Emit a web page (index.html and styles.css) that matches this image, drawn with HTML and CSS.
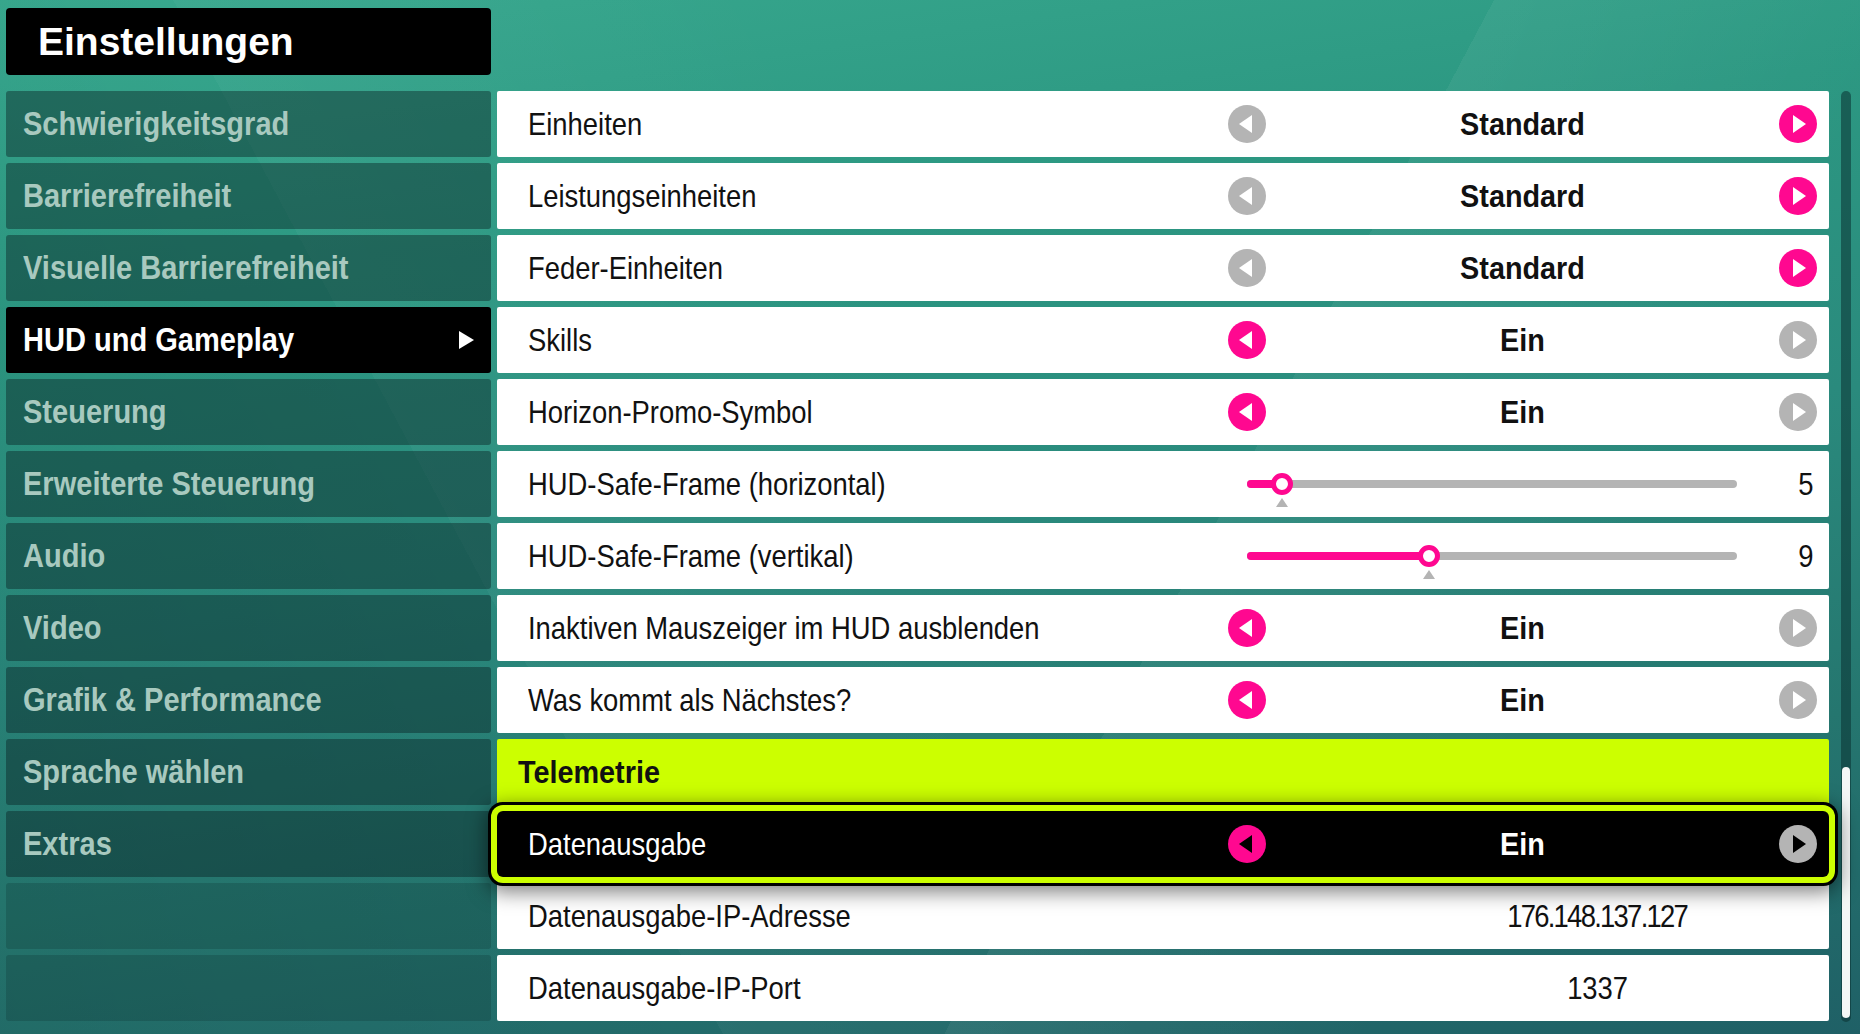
FILE: index.html
```html
<!DOCTYPE html>
<html lang="de">
<head>
<meta charset="UTF-8" />
<meta name="viewport" content="width=device-width, initial-scale=1" />
<title>Einstellungen</title>
<link rel="stylesheet" href="styles.css">
</head>
<body>
  <div class="screen">
    <header class="title-bar">
      <h1>Einstellungen</h1>
    </header>

    <div class="content">
      <nav class="menu">
        <div class="menu-item"><span>Schwierigkeitsgrad</span></div>
        <div class="menu-item"><span>Barrierefreiheit</span></div>
        <div class="menu-item"><span>Visuelle Barrierefreiheit</span></div>
        <div class="menu-item active"><span>HUD und Gameplay</span></div>
        <div class="menu-item"><span>Steuerung</span></div>
        <div class="menu-item"><span>Erweiterte Steuerung</span></div>
        <div class="menu-item"><span>Audio</span></div>
        <div class="menu-item"><span>Video</span></div>
        <div class="menu-item"><span>Grafik &amp; Performance</span></div>
        <div class="menu-item"><span>Sprache wählen</span></div>
        <div class="menu-item"><span>Extras</span></div>
        <div class="menu-item empty"></div>
        <div class="menu-item empty"></div>
      </nav>

      <section class="options">
        <div class="option">
          <span class="label">Einheiten</span>
          <div class="control">
            <svg class="arrow off" viewBox="0 0 38 38"><circle cx="19" cy="19" r="19"/><polygon points="24,10 11,19 24,28"/></svg>
            <span class="value">Standard</span>
            <svg class="arrow on" viewBox="0 0 38 38"><circle cx="19" cy="19" r="19"/><polygon points="14,10 27,19 14,28"/></svg>
          </div>
        </div>
        <div class="option">
          <span class="label">Leistungseinheiten</span>
          <div class="control">
            <svg class="arrow off" viewBox="0 0 38 38"><circle cx="19" cy="19" r="19"/><polygon points="24,10 11,19 24,28"/></svg>
            <span class="value">Standard</span>
            <svg class="arrow on" viewBox="0 0 38 38"><circle cx="19" cy="19" r="19"/><polygon points="14,10 27,19 14,28"/></svg>
          </div>
        </div>
        <div class="option">
          <span class="label">Feder-Einheiten</span>
          <div class="control">
            <svg class="arrow off" viewBox="0 0 38 38"><circle cx="19" cy="19" r="19"/><polygon points="24,10 11,19 24,28"/></svg>
            <span class="value">Standard</span>
            <svg class="arrow on" viewBox="0 0 38 38"><circle cx="19" cy="19" r="19"/><polygon points="14,10 27,19 14,28"/></svg>
          </div>
        </div>
        <div class="option">
          <span class="label">Skills</span>
          <div class="control">
            <svg class="arrow on" viewBox="0 0 38 38"><circle cx="19" cy="19" r="19"/><polygon points="24,10 11,19 24,28"/></svg>
            <span class="value">Ein</span>
            <svg class="arrow off" viewBox="0 0 38 38"><circle cx="19" cy="19" r="19"/><polygon points="14,10 27,19 14,28"/></svg>
          </div>
        </div>
        <div class="option">
          <span class="label">Horizon-Promo-Symbol</span>
          <div class="control">
            <svg class="arrow on" viewBox="0 0 38 38"><circle cx="19" cy="19" r="19"/><polygon points="24,10 11,19 24,28"/></svg>
            <span class="value">Ein</span>
            <svg class="arrow off" viewBox="0 0 38 38"><circle cx="19" cy="19" r="19"/><polygon points="14,10 27,19 14,28"/></svg>
          </div>
        </div>
        <div class="option">
          <span class="label">HUD-Safe-Frame (horizontal)</span>
          <div class="control slider">
            <div class="track">
              <div class="fill" style="width: 7.1%"><span class="knob"></span></div>
            </div>
            <span class="number">5</span>
          </div>
        </div>
        <div class="option">
          <span class="label">HUD-Safe-Frame (vertikal)</span>
          <div class="control slider">
            <div class="track">
              <div class="fill" style="width: 37.1%"><span class="knob"></span></div>
            </div>
            <span class="number">9</span>
          </div>
        </div>
        <div class="option">
          <span class="label">Inaktiven Mauszeiger im HUD ausblenden</span>
          <div class="control">
            <svg class="arrow on" viewBox="0 0 38 38"><circle cx="19" cy="19" r="19"/><polygon points="24,10 11,19 24,28"/></svg>
            <span class="value">Ein</span>
            <svg class="arrow off" viewBox="0 0 38 38"><circle cx="19" cy="19" r="19"/><polygon points="14,10 27,19 14,28"/></svg>
          </div>
        </div>
        <div class="option">
          <span class="label">Was kommt als Nächstes?</span>
          <div class="control">
            <svg class="arrow on" viewBox="0 0 38 38"><circle cx="19" cy="19" r="19"/><polygon points="24,10 11,19 24,28"/></svg>
            <span class="value">Ein</span>
            <svg class="arrow off" viewBox="0 0 38 38"><circle cx="19" cy="19" r="19"/><polygon points="14,10 27,19 14,28"/></svg>
          </div>
        </div>

        <div class="option group"><span>Telemetrie</span></div>

        <div class="option selected">
          <span class="label">Datenausgabe</span>
          <div class="control">
            <svg class="arrow on" viewBox="0 0 38 38"><circle cx="19" cy="19" r="19"/><polygon points="24,10 11,19 24,28"/></svg>
            <span class="value">Ein</span>
            <svg class="arrow off" viewBox="0 0 38 38"><circle cx="19" cy="19" r="19"/><polygon points="14,10 27,19 14,28"/></svg>
          </div>
        </div>
        <div class="option">
          <span class="label">Datenausgabe-IP-Adresse</span>
          <div class="control text"><span class="ip">176.148.137.127</span></div>
        </div>
        <div class="option">
          <span class="label">Datenausgabe-IP-Port</span>
          <div class="control text"><span>1337</span></div>
        </div>
      </section>

      <div class="scrollbar"><div class="thumb"></div></div>
    </div>
  </div>
</body>
</html>
```

FILE: styles.css
```css
:root {
  --pink: #ff0890;
  --grey: #b4b4b4;
  --lime: #ccff00;
  --menu-text: #a8c9bf;
  --sans: "Liberation Sans", Arial, sans-serif;
}

* {
  box-sizing: border-box;
}

html, body {
  height: 100%;
}

body {
  margin: 0;
  overflow: hidden;
  font-family: var(--sans);
  color: #111;
  background-color: #2a8f80;
  /* faint facets over the teal backdrop */
  background-image:
    linear-gradient(118deg, rgba(255,255,255,0) 62%, rgba(255,255,255,0.05) 62%, rgba(255,255,255,0) 80%),
    linear-gradient(62deg, rgba(0,0,0,0.06) 0%, rgba(0,0,0,0) 30%, rgba(255,255,255,0.03) 30%, rgba(255,255,255,0) 55%),
    linear-gradient(172deg, #38a88e 0%, #2c9882 25%, #2a8a7d 50%, #25766f 75%, #1f6066 100%);
}

.screen {
  padding: 8px 0 0 6px;
}

.title-bar {
  width: 485px;
  height: 67px;
  background: #000;
  border-radius: 4px;
  display: flex;
  align-items: center;
  padding-left: 32px;
}

.title-bar h1 {
  margin: 0;
  color: #fff;
  font-family: var(--sans);
  font-weight: bold;
  font-size: 39px;
}

.content {
  display: flex;
  margin-top: 16px;
  gap: 6px;
}

/* the game font is a condensed grotesque, squeeze the sans to match */
.menu-item span,
.option span {
  display: inline-block;
  white-space: nowrap;
  transform: scaleX(0.856);
  transform-origin: left center;
}

.option .value,
.option.group span {
  transform: scaleX(0.9);
}

.menu-item span {
  transform: scaleX(0.88);
}

/* left menu */
.menu {
  width: 485px;
  display: flex;
  flex-direction: column;
  gap: 6px;
}

.menu-item {
  height: 66px;
  display: flex;
  align-items: center;
  padding-left: 17px;
  border-radius: 3px;
  background: rgba(6, 28, 30, 0.42);
  color: var(--menu-text);
  font-weight: bold;
  font-size: 33px;
}

.menu-item.active {
  background: #000;
  color: #fff;
  justify-content: space-between;
  padding-right: 17px;
}

.menu-item.active::after {
  content: "";
  border-left: 15px solid #fff;
  border-top: 9px solid transparent;
  border-bottom: 9px solid transparent;
}

.menu-item.empty {
  background: rgba(6, 28, 30, 0.2);
}

/* option rows */
.options {
  width: 1332px;
  display: flex;
  flex-direction: column;
  gap: 6px;
}

.option {
  height: 66px;
  display: flex;
  align-items: center;
  padding: 0 12px 0 31px;
  background: #fff;
  border-radius: 2px;
  font-size: 32px;
}

.option .label {
  flex: 1;
}

.control {
  width: 589px;
  height: 100%;
  display: flex;
  align-items: center;
}

.option .value {
  flex: 1;
  text-align: center;
  font-weight: bold;
  transform-origin: center;
}

.arrow {
  width: 38px;
  height: 38px;
  flex: none;
}

.arrow.on circle {
  fill: var(--pink);
}

.arrow.off circle {
  fill: var(--grey);
}

.arrow polygon {
  fill: #fff;
}

.control.text {
  justify-content: center;
  padding-left: 150px;
}

.control.text span {
  transform-origin: center;
}

.control.text .ip {
  letter-spacing: -2px;
}

/* sliders */
.slider {
  padding-left: 19px;
}

.track {
  position: relative;
  width: 490px;
  height: 8px;
  border-radius: 4px;
  background: var(--grey);
}

.fill {
  position: relative;
  height: 100%;
  border-radius: 4px;
  background: var(--pink);
}

.option .knob {
  position: absolute;
  right: -11px;
  top: -7px;
  width: 22px;
  height: 22px;
  border-radius: 50%;
  background: #fff;
  border: 5px solid var(--pink);
  transform: none;
}

.knob::after {
  content: "";
  position: absolute;
  left: 0;
  top: 20px;
  border-bottom: 9px solid var(--grey);
  border-left: 6px solid transparent;
  border-right: 6px solid transparent;
}

.option .number {
  flex: 1;
  text-align: right;
  padding-right: 4px;
  transform-origin: right center;
}

/* section header */
.option.group {
  background: var(--lime);
  font-weight: bold;
  padding-left: 21px;
}

/* focused row */
.option.selected {
  position: relative;
  z-index: 1;
  background: #000;
  color: #fff;
  border-radius: 6px;
  box-shadow:
    0 0 0 6px var(--lime),
    0 0 0 9px #000,
    0 5px 20px 10px rgba(0, 0, 0, 0.5);
}

.option.selected .arrow polygon {
  fill: #000;
}

/* scrollbar */
.scrollbar {
  margin-left: 6px;
  width: 10px;
  height: 931px;
  border-radius: 5px;
  background: rgba(10, 50, 50, 0.55);
  display: flex;
  flex-direction: column;
  justify-content: flex-end;
  padding: 0 1px 4px;
}

.thumb {
  height: 251px;
  border-radius: 4px;
  background: #f4f7f6;
}
```
